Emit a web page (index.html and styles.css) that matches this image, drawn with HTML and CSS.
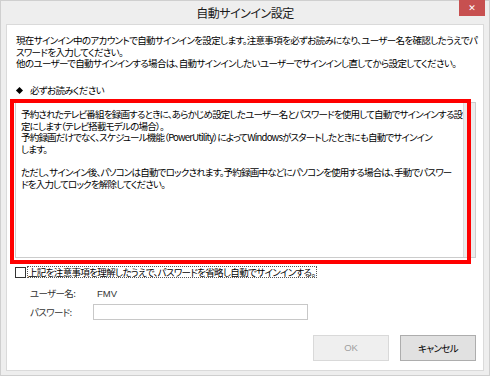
FILE: index.html
```html
<!DOCTYPE html>
<html lang="ja">
<head>
    <meta charset="UTF-8">
    <title>自動サインイン設定</title>
    <link rel="stylesheet" href="styles.css">
</head>
<body>
    <div class="window">
        <div class="titlebar">
            <span class="title">自動サインイン設定</span>
            <span class="close">&#x2715;</span>
        </div>

        <div class="content">
            <p class="intro">現在サインイン中のアカウントで自動サインインを設定します。注意事項を必ずお読みになり、ユーザー名を確認したうえでパ<br>スワードを入力してください。<br>他のユーザーで自動サインインする場合は、自動サインインしたいユーザーでサインインし直してから設定してください。</p>

            <div class="notice-head"><span class="diamond"></span>必ずお読みください</div>

            <!-- read-only notes box with disabled scrollbar -->
            <div class="memo">
                <div class="memo-text">予約されたテレビ番組を録画するときに、あらかじめ設定したユーザー名とパスワードを使用して自動でサインインする設<br>定にします（テレビ搭載モデルの場合）。<br>予約録画だけでなく、スケジュール機能（PowerUtility）によってWindowsがスタートしたときにも自動でサインイン<br>します。<br><br>ただし、サインイン後、パソコンは自動でロックされます。予約録画中などにパソコンを使用する場合は、手動でパスワー<br>ドを入力してロックを解除してください。</div>
                <div class="memo-scroll"></div>
            </div>

            <!-- red annotation frame over the notes -->
            <div class="highlight"></div>

            <label class="agree">
                <span class="checkbox"></span>
                <span class="agree-text">上記を注意事項を理解したうえで、パスワードを省略し自動でサインインする。</span>
            </label>

            <div class="form">
                <span class="label">ユーザー名:</span>
                <span class="value">FMV</span>
                <span class="label">パスワード:</span>
                <span class="input"></span>
            </div>

            <div class="buttons">
                <span class="btn btn-disabled">OK</span>
                <span class="btn">キャンセル</span>
            </div>
        </div>
    </div>
</body>
</html>
```

FILE: styles.css
```css
body {
    margin: 0;
    font-family: "Noto Sans CJK JP", "Noto Sans", sans-serif;
    font-feature-settings: "palt" 1;
    font-size: 9.5px;
    letter-spacing: -0.65px;
    color: #000;
}
.window {
    width: 490px;
    height: 376px;
    box-sizing: border-box;
    border: 1px solid #cfcfcf;
    background-color: #eeeeee;
    display: flex;
    flex-direction: column;
}
.titlebar {
    height: 23px;
    display: grid;
    grid-template-columns: 1fr auto 1fr;
    align-items: start;
}
.title {
    grid-column: 2;
    font-size: 12px;
    letter-spacing: -0.5px;
    line-height: 24px;
    color: #1a1a1a;
}
.close {
    grid-column: 3;
    justify-self: end;
    width: 26px;
    height: 16px;
    margin-right: 4px;
    margin-top: -1px;
    background-color: #c75050;
    color: #fff;
    font-family: "DejaVu Sans", sans-serif;
    font-size: 9px;
    font-weight: bold;
    letter-spacing: 0;
    line-height: 16px;
    text-align: center;
}
.content {
    position: relative;
    margin: 0 5px 4px 5px;
    flex: 1;
    background-color: #fff;
    border: 1px solid #dadada;
    padding-top: 10px;
}
.intro {
    margin: 0;
    padding-left: 9px;
    line-height: 11.5px;
    white-space: nowrap;
}
.notice-head {
    margin-top: 15.5px;
    padding-left: 10px;
    line-height: 11.5px;
    display: flex;
    align-items: center;
}
.diamond {
    width: 5px;
    height: 5px;
    margin-right: 8px;
    background-color: #000;
    transform: rotate(45deg);
}
.memo {
    margin: 5.5px 7px 0 8px;
    height: 156px;
    box-sizing: border-box;
    border: 1px solid #cccccc;
    display: flex;
}
.memo-text {
    flex: 1;
    padding: 6px 0 0 5px;
    line-height: 11.6px;
    letter-spacing: -0.8px;
    white-space: nowrap;
}
.memo-scroll {
    width: 11px;
    border-left: 1px solid #dddddd;
    background-color: #ececec;
}
.highlight {
    position: absolute;
    left: 3px;
    top: 74px;
    width: 461px;
    height: 165px;
    box-sizing: border-box;
    border: 4px solid #ff0000;
}
.agree {
    margin: 8px 0 0 8px;
    display: flex;
    align-items: center;
    line-height: 12px;
}
.checkbox {
    width: 11px;
    height: 11px;
    box-sizing: border-box;
    border: 1px solid #333;
    background-color: #fff;
}
.agree-text {
    margin-left: 1px;
    padding: 0 2px 0 1px;
    outline: 1px dotted #555;
    outline-offset: -1px;
    white-space: nowrap;
}
.form {
    margin: 8px 0 0 23px;
    display: grid;
    grid-template-columns: 63px 215px;
    row-gap: 4px;
    align-items: center;
}
.label {
    color: #333;
    line-height: 14px;
}
.value {
    padding-left: 4px;
    color: #333;
    font-family: "Liberation Sans", sans-serif;
    letter-spacing: 0;
}
.input {
    height: 16px;
    box-sizing: border-box;
    border: 1px solid #c8c8c8;
}
.buttons {
    margin: 15px 7px 0 0;
    display: flex;
    justify-content: flex-end;
    gap: 11px;
}
.btn {
    width: 76px;
    height: 26px;
    box-sizing: border-box;
    border: 1px solid #adadad;
    background-color: #e1e1e1;
    line-height: 24px;
    text-align: center;
}
.btn-disabled {
    border-color: #d9d9d9;
    background-color: #efefef;
    color: #a0a0a0;
    font-family: "Liberation Sans", sans-serif;
    letter-spacing: 0;
}
```
